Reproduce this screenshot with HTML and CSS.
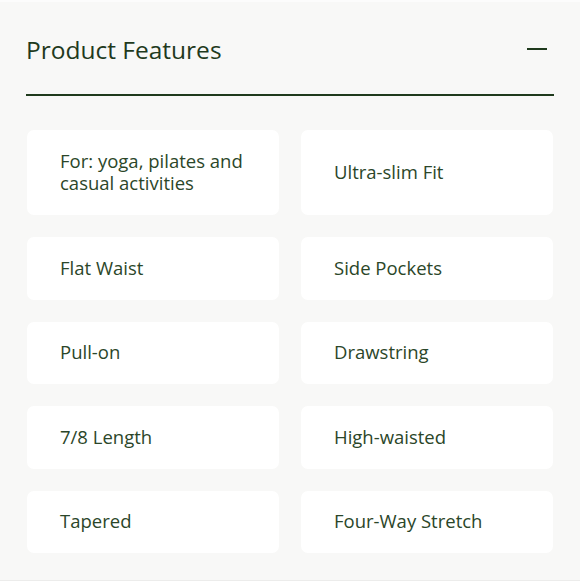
FILE: index.html
```html
<!DOCTYPE html>
<html>
<head>
<meta charset="utf-8">
<link rel="stylesheet" href="styles.css">
</head>
<body>
<section class="panel">
  <header class="panel-header">
    <h2 class="panel-title">Product Features</h2>
    <span class="toggle" aria-hidden="true"></span>
  </header>
  <ul class="features">
    <li class="feature">For: yoga, pilates and casual activities</li>
    <li class="feature">Ultra-slim Fit</li>
    <li class="feature">Flat Waist</li>
    <li class="feature">Side Pockets</li>
    <li class="feature">Pull-on</li>
    <li class="feature">Drawstring</li>
    <li class="feature">7/8 Length</li>
    <li class="feature">High-waisted</li>
    <li class="feature">Tapered</li>
    <li class="feature">Four-Way Stretch</li>
  </ul>
</section>
</body>
</html>
```

FILE: styles.css
```css
html, body {
  margin: 0;
  padding: 0;
  background: #f8f8f7;
}
body {
  font-family: "Open Sans", Lato, sans-serif;
  color: #2b4629;
}
.panel {
  box-sizing: border-box;
  height: 581px;
  padding: 0 26px;
  border-top: 2px solid #fcfcfc;
  border-bottom: 1px solid #ececeb;
}
.panel-header {
  display: flex;
  align-items: center;
  justify-content: space-between;
  box-sizing: border-box;
  height: 94px;
  padding-top: 2px;
  border-bottom: 2px solid #1f3a1d;
}
.panel-title {
  margin: 0;
  font-size: 24.5px;
  font-weight: 400;
  color: #1f3a1d;
}
.toggle {
  display: block;
  width: 20px;
  height: 2px;
  margin-right: 7px;
  background: #1f3a1d;
}
.features {
  list-style: none;
  margin: 34px 1px 0;
  padding: 0;
  display: grid;
  grid-template-columns: 1fr 1fr;
  gap: 22px;
}
.feature {
  display: flex;
  align-items: center;
  background: #ffffff;
  border-radius: 7px;
  padding: 19.5px 20px 20.5px 33px;
  font-size: 18.5px;
  line-height: 22.5px;
}
```
